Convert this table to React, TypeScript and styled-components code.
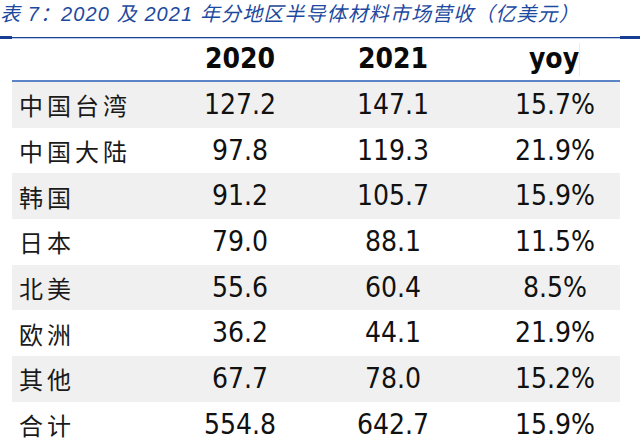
import styled, { createGlobalStyle } from 'styled-components';

type Row = { region: string; y2020: string; y2021: string; yoy: string };

const ROWS: Row[] = [
  { region: '中国台湾', y2020: '127.2', y2021: '147.1', yoy: '15.7%' },
  { region: '中国大陆', y2020: '97.8', y2021: '119.3', yoy: '21.9%' },
  { region: '韩国', y2020: '91.2', y2021: '105.7', yoy: '15.9%' },
  { region: '日本', y2020: '79.0', y2021: '88.1', yoy: '11.5%' },
  { region: '北美', y2020: '55.6', y2021: '60.4', yoy: '8.5%' },
  { region: '欧洲', y2020: '36.2', y2021: '44.1', yoy: '21.9%' },
  { region: '其他', y2020: '67.7', y2021: '78.0', yoy: '15.2%' },
  { region: '合计', y2020: '554.8', y2021: '642.7', yoy: '15.9%' },
];

/** 半导体材料营收表 */
const App: React.FC = (): JSX.Element => {
  return (
    <>
      <GlobalStyle />
      <Page>
        <Title>表 7：2020 及 2021 年分地区半导体材料市场营收（亿美元）</Title>
        <TopRule>
          <RuleCap $width={12} />
          <RuleMid />
          <RuleCap $width={20} />
        </TopRule>
        <Table>
          <HeaderRow>
            <span />
            <HeadCell>2020</HeadCell>
            <HeadCell>2021</HeadCell>
            <HeadCell $shift={18}>yoy</HeadCell>
          </HeaderRow>
          {ROWS.map((row, i) => (
            <DataRow key={row.region} $striped={i % 2 === 0}>
              <Label>{row.region}</Label>
              <Value>{row.y2020}</Value>
              <Value>{row.y2021}</Value>
              <Value $shift={20}>{row.yoy}</Value>
            </DataRow>
          ))}
        </Table>
      </Page>
    </>
  );
};

export default App;

const GlobalStyle = createGlobalStyle`
  html, body {
    margin: 0;
    padding: 0;
    background: #ffffff;
  }
`;

const Page = styled.div`
  width: 640px;
  height: 447px;
  overflow: hidden;
  background: #ffffff;
`;

const Title = styled.h1`
  margin: 0;
  height: 36px;
  padding-top: 2px;
  box-sizing: border-box;
  font-family: 'Liberation Sans', 'Noto Sans CJK SC', sans-serif;
  font-style: italic;
  font-weight: 400;
  font-size: 20px;
  line-height: 25px;
  letter-spacing: 1.1px;
  color: #1d4aa0;
  white-space: nowrap;
`;

const TopRule = styled.div`
  display: flex;
  height: 3px;
`;

const RuleCap = styled.div<{ $width: number }>`
  width: ${(p) => p.$width}px;
  background: #163f94;
`;

const RuleMid = styled.div`
  flex: 1;
  border-top: 1px solid #1b4394;
  border-bottom: 1px solid #b9c9e8;
  margin-top: 0.5px;
  height: 0;
`;

const Table = styled.div`
  margin-left: 12px;
  width: 608px;
`;

const columns = '152px 152px 154px 150px';

const HeaderRow = styled.div`
  position: relative;
  display: grid;
  grid-template-columns: ${columns};
  align-items: end;
  height: 43px;
  padding-bottom: 6px;
  box-sizing: border-box;
  border-bottom: 2px solid #5d84c6;

  &::after {
    content: '';
    position: absolute;
    left: 567px;
    top: 4px;
    bottom: 4px;
    width: 1px;
    background: #ececec;
  }
`;

const HeadCell = styled.div<{ $shift?: number }>`
  padding-left: ${(p) => p.$shift ?? 0}px;
  text-align: center;
  font-family: 'DejaVu Sans Condensed', 'DejaVu Sans', sans-serif;
  font-stretch: condensed;
  font-weight: 700;
  font-size: 28px;
  line-height: 30px;
  color: #0a0a0a;
`;

const DataRow = styled.div<{ $striped: boolean }>`
  display: grid;
  grid-template-columns: ${columns};
  align-items: center;
  height: 45.7px;
  background: ${(p) => (p.$striped ? '#f0f0f0' : '#ffffff')};
`;

const Label = styled.div`
  padding-left: 7px;
  font-family: 'Noto Sans CJK SC', sans-serif;
  font-size: 24px;
  letter-spacing: 4px;
  color: #1a1a1a;
  white-space: nowrap;
`;

const Value = styled.div<{ $shift?: number }>`
  padding-left: ${(p) => p.$shift ?? 0}px;
  text-align: center;
  font-family: 'DejaVu Sans Condensed', 'DejaVu Sans', sans-serif;
  font-stretch: condensed;
  font-size: 28px;
  line-height: 32px;
  color: #111111;
`;
